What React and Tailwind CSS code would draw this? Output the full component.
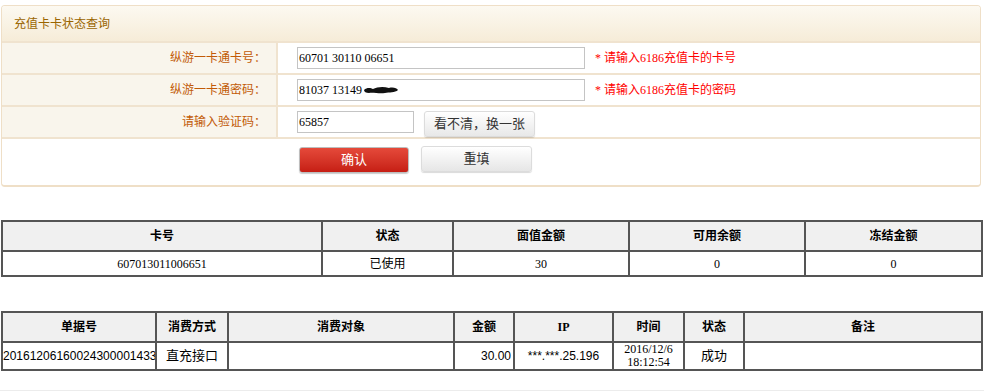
import React from "react";

const cjk = { fontFamily: '"Liberation Serif", "Noto Sans CJK SC", serif' };
const sans = { fontFamily: '"Liberation Sans", "Noto Sans CJK SC", sans-serif' };

function FormRow({ label, children }) {
  return (
    <div className="flex h-[32px] border-t-2 border-[#f0e3cf]">
      <div className="w-[276px] shrink-0 bg-[#f9f5ec] border-r-2 border-[#f0e3cf] flex items-center justify-end pr-[10px] text-[12px] text-[#c25a06]">
        {label}
      </div>
      <div className="flex items-center pl-[19px] gap-[10px]">{children}</div>
    </div>
  );
}

export default function App() {
  return (
    <div className="w-[984px] h-[391px] bg-white overflow-hidden text-[12px] text-black" style={cjk}>
      {/* Panel */}
      <div className="ml-[1px] mt-[5px] w-[980px] border border-[#efdfc7] border-b-2 rounded-[4px] overflow-hidden">
        <div className="h-[35px] bg-gradient-to-b from-[#fcf9f1] to-[#f6ecd8] flex items-center pl-[12px] text-[12px] text-[#9a6500]">
          充值卡卡状态查询
        </div>
        <FormRow label="纵游一卡通卡号：">
          <div className="w-[288px] h-[22px] border border-[#c4c4c4] flex items-center pl-[1px]">60701 30110 06651</div>
          <span className="text-[#ff0000]">* 请输入6186充值卡的卡号</span>
        </FormRow>
        <FormRow label="纵游一卡通密码：">
          <div className="w-[288px] h-[22px] border border-[#c4c4c4] flex items-center pl-[1px]">
            81037 13149
            <svg width="36" height="10" viewBox="0 0 36 10" className="ml-[1px]">
              <path d="M1 5 C4 2 8 3 10 4 C14 2 20 1 26 3 C30 2 34 3 35 5 C32 8 26 7 22 8 C16 9 10 7 6 8 C3 8 1 7 1 5 Z" fill="#111" />
            </svg>
          </div>
          <span className="text-[#ff0000]">* 请输入6186充值卡的密码</span>
        </FormRow>
        <FormRow label="请输入验证码：">
          <div className="w-[117px] h-[22px] border border-[#c4c4c4] flex items-center pl-[1px]">65857</div>
          <div className="w-[111px] h-[26px] mt-[4px] rounded-[3px] border border-[#dcdcdc] bg-gradient-to-b from-[#ffffff] to-[#e8e8e8] shadow-[0_1px_1px_rgba(0,0,0,0.15)] flex items-center justify-center text-[13px] text-[#333]">
            看不清，换一张
          </div>
        </FormRow>
        <div className="h-[48px] border-t-2 border-[#f0e3cf] flex items-start pt-[7px] pl-[297px] gap-[12px]">
          <div className="w-[110px] h-[26px] mt-[1px] rounded-[3px] border border-[#bdbdbd] bg-gradient-to-b from-[#e5493a] to-[#c61d13] shadow-[0_1px_1px_rgba(0,0,0,0.2)] flex items-center justify-center text-[13px] text-white">
            确认
          </div>
          <div className="w-[111px] h-[26px] rounded-[3px] border border-[#dcdcdc] bg-gradient-to-b from-[#ffffff] to-[#e6e6e6] shadow-[0_1px_1px_rgba(0,0,0,0.15)] flex items-center justify-center text-[13px] text-[#333]">
            重填
          </div>
        </div>
      </div>

      {/* Table 1 */}
      <table className="ml-[1px] mt-[33px] w-[980px] border-collapse table-fixed border-2 border-[#555]">
        <colgroup>
          <col className="w-[320px]" />
          <col className="w-[131px]" />
          <col className="w-[176px]" />
          <col className="w-[176px]" />
          <col className="w-[177px]" />
        </colgroup>
        <thead>
          <tr className="h-[30px] bg-[#f0f0f0]">
            {["卡号", "状态", "面值金额", "可用余额", "冻结金额"].map((h) => (
              <th key={h} className="border-2 border-[#555] font-bold text-center p-0">{h}</th>
            ))}
          </tr>
        </thead>
        <tbody>
          <tr className="h-[25px]">
            <td className="border-2 border-[#555] text-center p-0">607013011006651</td>
            <td className="border-2 border-[#555] text-center p-0">已使用</td>
            <td className="border-2 border-[#555] text-center p-0">30</td>
            <td className="border-2 border-[#555] text-center p-0">0</td>
            <td className="border-2 border-[#555] text-center p-0">0</td>
          </tr>
        </tbody>
      </table>

      {/* Table 2 */}
      <table className="ml-[1px] mt-[34px] w-[980px] border-collapse table-fixed border-2 border-[#555]">
        <colgroup>
          <col className="w-[154px]" />
          <col className="w-[72px]" />
          <col className="w-[226px]" />
          <col className="w-[60px]" />
          <col className="w-[99px]" />
          <col className="w-[71px]" />
          <col className="w-[60px]" />
          <col className="w-[238px]" />
        </colgroup>
        <thead>
          <tr className="h-[30px] bg-[#f0f0f0]">
            {["单据号", "消费方式", "消费对象", "金额", "IP", "时间", "状态", "备注"].map((h) => (
              <th key={h} className="border-2 border-[#555] font-bold text-center p-0">{h}</th>
            ))}
          </tr>
        </thead>
        <tbody>
          <tr className="h-[25px]">
            <td className="border-2 border-[#555] text-left p-0 overflow-hidden whitespace-nowrap" style={sans}>20161206160024300001433</td>
            <td className="border-2 border-[#555] text-center p-0 text-[13px]">直充接口</td>
            <td className="border-2 border-[#555] p-0"></td>
            <td className="border-2 border-[#555] text-right pr-[2px] p-0" style={sans}>30.00</td>
            <td className="border-2 border-[#555] text-center p-0" style={sans}>***.***.25.196</td>
            <td className="border-2 border-[#555] text-center p-0 leading-[13px]">2016/12/6<br />18:12:54</td>
            <td className="border-2 border-[#555] text-center p-0 text-[13px]">成功</td>
            <td className="border-2 border-[#555] p-0"></td>
          </tr>
        </tbody>
      </table>

      <div className="mt-[19px] h-[2px] w-full bg-[#ececec]" />
    </div>
  );
}
